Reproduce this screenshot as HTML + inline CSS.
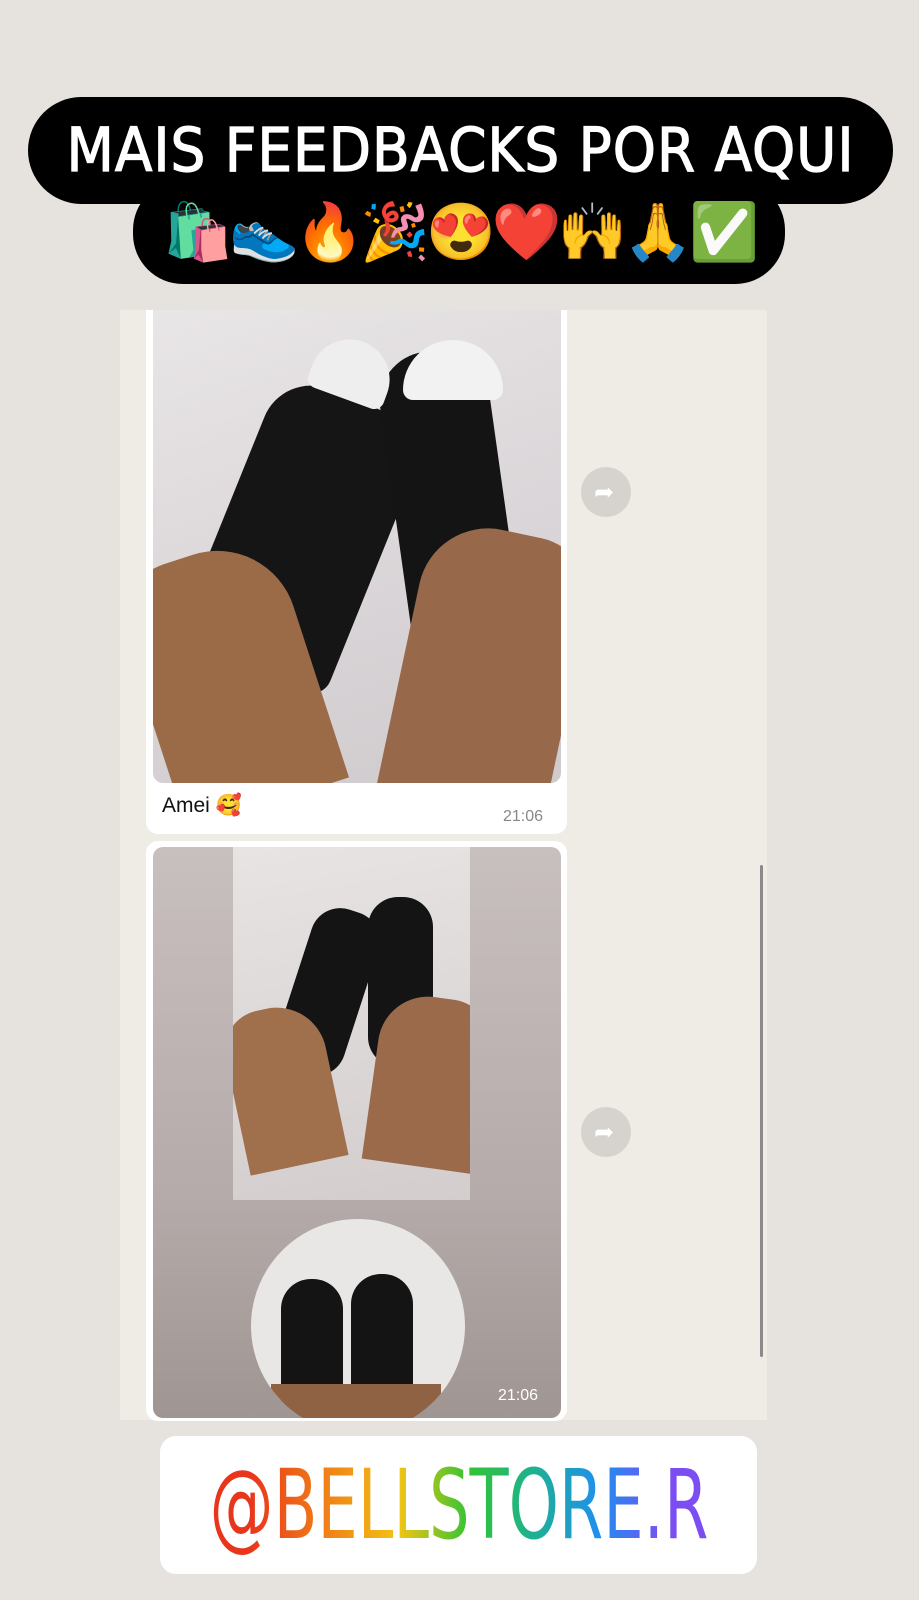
<!DOCTYPE html>
<html><head><meta charset="utf-8"><style>
*{margin:0;padding:0;box-sizing:border-box}
body{width:919px;height:1600px;background:#e6e3de;position:relative;overflow:hidden;font-family:"Liberation Sans",sans-serif}
.abs{position:absolute}
.pill1{left:28px;top:97px;width:865px;height:107px;background:#000;border-radius:54px}
.pill2{left:133px;top:180px;width:652px;height:104px;background:#000;border-radius:50px}
.title{left:28px;top:116px;width:865px;text-align:center;color:#fff;font-size:61px;font-family:"DejaVu Sans Condensed","Liberation Sans",sans-serif;letter-spacing:1px;line-height:70px;-webkit-text-stroke:1.2px #fff}
.emo{left:133px;top:192px;width:652px;text-align:center;font-size:56px;line-height:80px;font-family:"Noto Color Emoji",sans-serif;letter-spacing:-4px}
.chat{left:120px;top:310px;width:647px;height:1110px;background:#efece6}
.bub{background:#fff;border-radius:12px}
.fw{width:50px;height:50px;border-radius:50%;background:#d6d3ce}
.time{font-size:16px;color:#888}
.brand{left:160px;top:1436px;width:597px;height:138px;background:#fff;border-radius:16px}
.btext{left:459px;top:1450px;white-space:nowrap;font-family:"DejaVu Sans Condensed",sans-serif;font-size:96px;line-height:110px;transform:translateX(-50%) scaleX(.74);
background:linear-gradient(90deg,#e8361c 8%,#f07a18 22%,#f2c414 38%,#33c434 52%,#1eb38a 64%,#1f8ff0 78%,#7b4df2 92%);-webkit-background-clip:text;background-clip:text;color:transparent}
</style></head><body>
<div class="abs pill1"></div><div class="abs pill2"></div>
<div class="abs title">MAIS FEEDBACKS POR AQUI</div>
<div class="abs emo">🛍👟🔥🎉😍❤️🙌🙏✅</div>
<div class="abs chat"></div>
<div class="abs" style="left:760px;top:865px;width:3px;height:492px;background:#8a8a8a;border-radius:2px"></div>
<div class="abs bub" style="left:146px;top:310px;width:421px;height:524px;border-radius:0 0 12px 12px"></div>
<div class="abs" style="left:153px;top:310px;width:408px;height:473px;border-radius:0 0 10px 10px;overflow:hidden;background:linear-gradient(160deg,#e9e6e7,#d9d4d7 60%,#cfcacc)">
 <div class="abs" style="left:70px;top:80px;width:160px;height:290px;background:#151515;border-radius:50px 60px 20px 40px;transform:rotate(22deg)"></div>
 <div class="abs" style="left:240px;top:40px;width:110px;height:290px;background:#141414;border-radius:50px 50px 20px 20px;transform:rotate(-8deg)"></div>
 <div class="abs" style="left:250px;top:30px;width:100px;height:60px;background:#f2f2f2;border-radius:50px 50px 10px 10px"></div>
 <div class="abs" style="left:160px;top:30px;width:80px;height:60px;background:#eee;border-radius:40px 40px 10px 10px;transform:rotate(20deg)"></div>
 <div class="abs" style="left:-10px;top:240px;width:170px;height:260px;background:#9b6a47;border-radius:60px 80px 0 0;transform:rotate(-18deg)"></div>
 <div class="abs" style="left:250px;top:220px;width:170px;height:280px;background:#98684a;border-radius:70px 60px 0 0;transform:rotate(12deg)"></div>
</div>
<div class="abs" style="left:162px;top:794px;font-size:21px;color:#111">Amei 🥰</div>
<div class="abs time" style="left:503px;top:808px">21:06</div>
<div class="abs fw" style="left:581px;top:467px"></div>
<div class="abs" style="left:594px;top:478px;color:#fff;font-size:24px">➦</div>
<div class="abs bub" style="left:146px;top:841px;width:421px;height:580px"></div>
<div class="abs" style="left:153px;top:847px;width:408px;height:571px;border-radius:10px;overflow:hidden;background:linear-gradient(180deg,#c8bfbf,#b5abaa 60%,#9f9592)">
 <div class="abs" style="left:80px;top:0;width:237px;height:353px;background:linear-gradient(170deg,#e8e4e4,#d3cdcd);overflow:hidden">
  <div class="abs" style="left:60px;top:60px;width:70px;height:170px;background:#141414;border-radius:30px;transform:rotate(18deg)"></div>
  <div class="abs" style="left:135px;top:50px;width:65px;height:170px;background:#141414;border-radius:30px"></div>
  <div class="abs" style="left:0;top:160px;width:100px;height:160px;background:#a06f4c;border-radius:40px 50px 0 0;transform:rotate(-12deg)"></div>
  <div class="abs" style="left:140px;top:150px;width:110px;height:170px;background:#9a6a4a;border-radius:50px 40px 0 0;transform:rotate(8deg)"></div>
 </div>
 <div class="abs" style="left:98px;top:372px;width:214px;height:214px;border-radius:50%;background:#e9e6e6;overflow:hidden">
  <div class="abs" style="left:30px;top:60px;width:62px;height:160px;background:#141414;border-radius:30px"></div>
  <div class="abs" style="left:100px;top:55px;width:62px;height:160px;background:#141414;border-radius:30px"></div>
  <div class="abs" style="left:20px;top:165px;width:170px;height:60px;background:#8f6244"></div>
 </div>
 <div class="abs" style="left:345px;top:540px;color:#fff;font-size:16px">21:06</div>
</div>
<div class="abs fw" style="left:581px;top:1107px"></div>
<div class="abs" style="left:594px;top:1118px;color:#fff;font-size:24px">➦</div>
<div class="abs brand"></div>
<div class="abs btext">@BELLSTORE.R</div>
</body></html>
